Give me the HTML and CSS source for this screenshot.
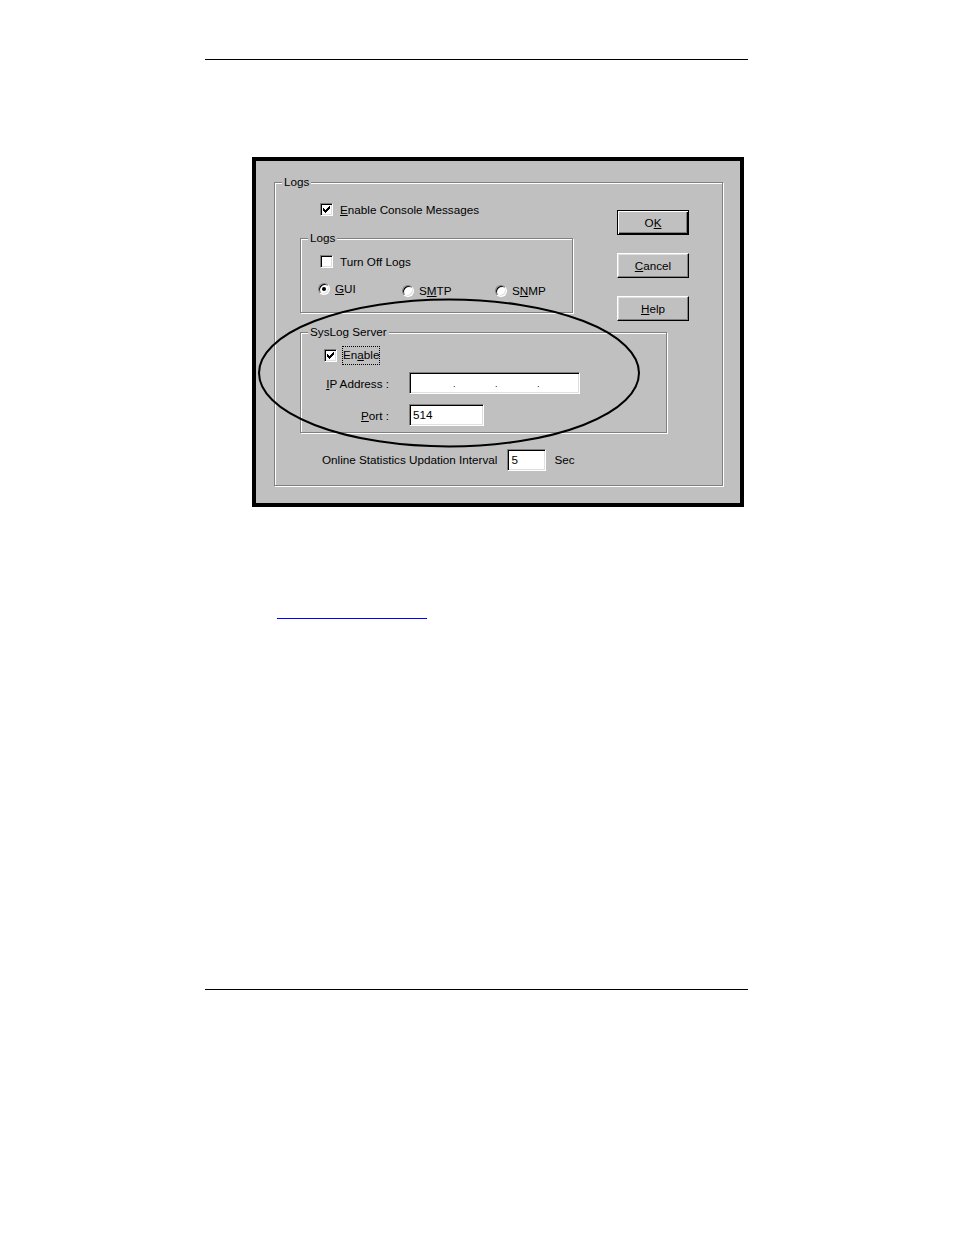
FILE: index.html
```html
<!DOCTYPE html>
<html lang="en">
<head>
<meta charset="utf-8">
<title>Logs</title>
<link rel="stylesheet" href="styles.css">
</head>
<body>
<div class="page">
  <div class="rule"></div>
  <div class="dialog">
    <div class="grp grp-outer">
      <span class="legend">Logs</span>
      <div class="top">
        <div class="leftcol">
          <div class="chkrow chk-console">
            <span class="cb"><svg class="tick" width="7" height="7" viewBox="0 0 7 7" shape-rendering="crispEdges"><rect x="6" y="0" width="1" height="1"/><rect x="5" y="1" width="2" height="1"/><rect x="0" y="2" width="1" height="1"/><rect x="4" y="2" width="3" height="1"/><rect x="0" y="3" width="2" height="1"/><rect x="3" y="3" width="3" height="1"/><rect x="0" y="4" width="5" height="1"/><rect x="1" y="5" width="3" height="1"/><rect x="2" y="6" width="1" height="1"/></svg></span>
            <span class="lbl"><u>E</u>nable Console Messages</span>
          </div>
          <div class="grp grp-logs">
            <span class="legend">Logs</span>
            <div class="chkrow chk-turnoff">
              <span class="cb"></span>
              <span class="lbl">Turn Off Logs</span>
            </div>
            <div class="radios">
              <div class="ritem r-gui"><span class="rb on"></span><span class="lbl"><u>G</u>UI</span></div>
              <div class="ritem r-smtp"><span class="rb"></span><span class="lbl">S<u>M</u>TP</span></div>
              <div class="ritem r-snmp"><span class="rb"></span><span class="lbl">S<u>N</u>MP</span></div>
            </div>
          </div>
        </div>
        <div class="btncol">
          <button class="btn btn-default" type="button">O<u>K</u></button>
          <button class="btn" type="button"><u>C</u>ancel</button>
          <button class="btn" type="button"><u>H</u>elp</button>
        </div>
      </div>
      <div class="grp grp-syslog">
        <span class="legend">SysLog Server</span>
        <div class="chkrow chk-enable">
          <span class="cb"><svg class="tick" width="7" height="7" viewBox="0 0 7 7" shape-rendering="crispEdges"><rect x="6" y="0" width="1" height="1"/><rect x="5" y="1" width="2" height="1"/><rect x="0" y="2" width="1" height="1"/><rect x="4" y="2" width="3" height="1"/><rect x="0" y="3" width="2" height="1"/><rect x="3" y="3" width="3" height="1"/><rect x="0" y="4" width="5" height="1"/><rect x="1" y="5" width="3" height="1"/><rect x="2" y="6" width="1" height="1"/></svg></span>
          <span class="lbl focus">En<u>a</u>ble</span>
        </div>
        <div class="fields">
          <span class="flabel"><u>I</u>P Address :</span>
          <div class="field field-ip"><span class="dot">.</span><span class="dot">.</span><span class="dot">.</span></div>
          <span class="flabel"><u>P</u>ort :</span>
          <div class="field field-port">514</div>
        </div>
      </div>
      <div class="stats">
        <span class="lbl">Online Statistics Updation Interval</span>
        <div class="field field-interval">5</div>
        <span class="lbl sec">Sec</span>
      </div>
    </div>
    <svg class="mark" width="484" height="342" viewBox="0 0 484 342">
      <ellipse cx="193" cy="212" rx="190" ry="73.5" fill="none" stroke="#000" stroke-width="2"/>
    </svg>
  </div>
  <div class="xref-row"><a class="xref" href="#" aria-label="link"></a></div>
  <div class="rule rule-bottom"></div>
</div>
</body>
</html>
```

FILE: styles.css
```css
* { box-sizing: border-box; }

body {
  margin: 0;
  background: #fff;
  font-family: "Liberation Sans", Arial, sans-serif;
  color: #000;
}

.page {
  padding: 59px 0 0 205px;
  width: 748px;
}

.rule {
  width: 543px;
  height: 1px;
  background: #000;
}

.rule-bottom {
  margin-top: 370px;
}

/* dialog */
.dialog {
  position: relative;
  margin: 97px 0 0 47px;
  width: 492px;
  height: 350px;
  border: 4px solid #000;
  background: #c0c0c0;
  padding: 21px 0 0 18px;
  font-size: 11.7px;
  line-height: 14px;
}

.grp {
  position: relative;
  border: 1px solid #808080;
  box-shadow: inset 1px 1px 0 #fff, 1px 1px 0 #fff;
}

.legend {
  position: absolute;
  top: -8px;
  left: 7px;
  padding: 0 2px;
  background: #c0c0c0;
  line-height: 14px;
  white-space: nowrap;
}

.grp-outer {
  width: 449px;
  height: 304px;
}

.top {
  display: flex;
  align-items: flex-start;
}

.leftcol {
  margin-left: 25px;
  width: 273px;
}

.chkrow {
  display: flex;
  align-items: center;
  height: 13px;
}

.chk-console {
  margin-top: 20px;
  padding-left: 20px;
}

.lbl {
  white-space: nowrap;
}

.chk-console .lbl,
.chk-turnoff .lbl {
  margin-left: 7px;
}

/* checkbox */
.cb {
  position: relative;
  flex: none;
  width: 13px;
  height: 13px;
  background: #fff;
  border: 1px solid;
  border-color: #808080 #fff #fff #808080;
  box-shadow: inset 1px 1px 0 #000, inset -1px -1px 0 #dfdfdf;
}

.tick {
  position: absolute;
  left: 2px;
  top: 2px;
  fill: #000;
}

.grp-logs {
  margin-top: 22px;
  width: 273px;
  height: 75px;
}

.chk-turnoff {
  margin-top: 16px;
  padding-left: 19px;
}

.radios {
  display: flex;
  align-items: flex-start;
  margin-top: 15px;
  padding-left: 17px;
}

.ritem {
  display: flex;
  align-items: center;
  height: 12px;
}

.ritem .lbl {
  margin-left: 5px;
}

.r-gui { width: 84px; }
.r-smtp { width: 93px; margin-top: 2px; }
.r-snmp { margin-top: 2px; }

/* radio */
.rb {
  position: relative;
  flex: none;
  width: 12px;
  height: 12px;
  border-radius: 50%;
  background: #fff;
  border: 1px solid;
  border-color: #808080 #fff #fff #808080;
  box-shadow: inset 1px 1px 0 #000, inset -1px -1px 0 #dfdfdf;
}

.rb.on::after {
  content: "";
  position: absolute;
  left: 3px;
  top: 3px;
  width: 4px;
  height: 4px;
  border-radius: 50%;
  background: #000;
}

/* buttons */
.btncol {
  display: flex;
  flex-direction: column;
  gap: 18px;
  margin: 27px 0 0 44px;
}

.btn {
  width: 72px;
  height: 25px;
  padding: 0;
  font: inherit;
  color: #000;
  background: #c0c0c0;
  border: 1px solid;
  border-color: #fff #000 #000 #fff;
  box-shadow: inset -1px -1px 0 #808080, inset 1px 1px 0 #dfdfdf;
  text-align: center;
  cursor: default;
}

.btn-default {
  border-color: #000;
  box-shadow: inset 1px 1px 0 #fff, inset -1px -1px 0 #000, inset -2px -2px 0 #808080;
}

/* syslog */
.grp-syslog {
  margin: 11px 0 0 25px;
  width: 367px;
  height: 101px;
}

.chk-enable {
  margin-top: 16px;
  padding-left: 23px;
}

.focus {
  margin-left: 5px;
  padding: 2px 1px 3px 1px;
  outline: 1px dotted #000;
  outline-offset: -1px;
  line-height: 14px;
}

.fields {
  display: grid;
  grid-template-columns: 88px 171px;
  column-gap: 20px;
  row-gap: 10px;
  align-items: center;
  margin-top: 10px;
}

.flabel {
  text-align: right;
  white-space: nowrap;
  padding-top: 2px;
}

.field {
  height: 22px;
  background: #fff;
  border: 1px solid;
  border-color: #808080 #fff #fff #808080;
  box-shadow: inset 1px 1px 0 #000, inset -1px -1px 0 #dfdfdf;
  padding: 3px 0 0 3px;
  line-height: 14px;
}

.field-ip {
  display: flex;
  width: 171px;
  padding-left: 43px;
  padding-top: 4px;
}

.dot {
  width: 42px;
  font-size: 9px;
}

.field-port {
  width: 75px;
}

/* stats */
.stats {
  display: flex;
  align-items: center;
  margin: 16px 0 0 47px;
  height: 22px;
}

.field-interval {
  width: 39px;
  margin-left: 10px;
}

.sec {
  margin-left: 8px;
}

/* hand-drawn highlight ellipse */
.mark {
  position: absolute;
  left: 0;
  top: 0;
  pointer-events: none;
}

/* cross-reference link */
.xref-row {
  margin: 97px 0 0 72px;
  height: 15px;
}

.xref {
  display: inline-block;
  width: 150px;
  height: 15px;
  border-bottom: 1px solid #0000ff;
}
```
